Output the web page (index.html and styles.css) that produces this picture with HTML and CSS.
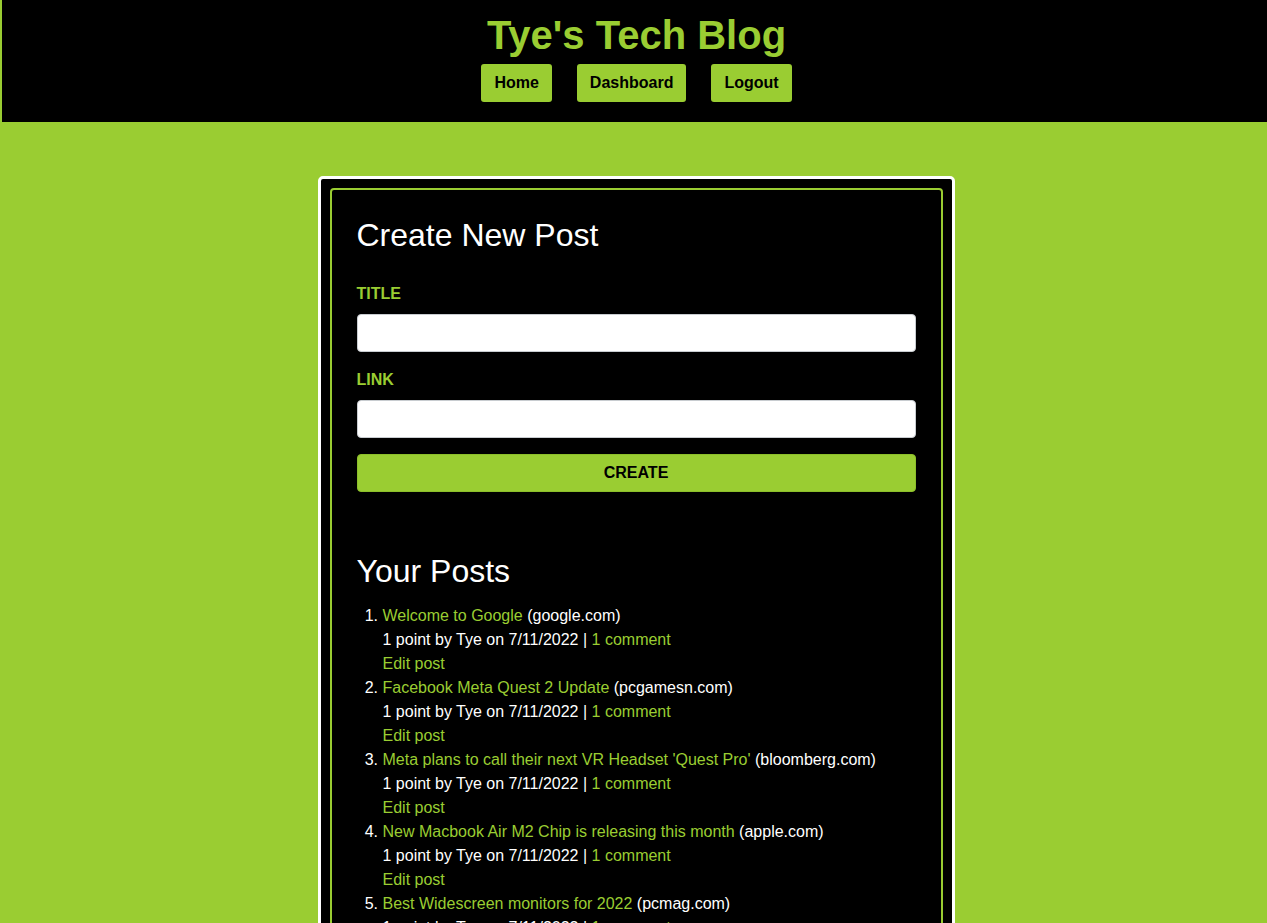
FILE: index.html
```html
<!DOCTYPE html>
<html lang="en">
<head>
<meta charset="utf-8">
<title>Tye's Tech Blog</title>
<link rel="stylesheet" href="styles.css">
</head>
<body>
<header class="site-header">
  <h1 class="site-title">Tye's Tech Blog</h1>
  <nav class="nav">
    <a class="nav-btn" href="#">Home</a>
    <a class="nav-btn" href="#">Dashboard</a>
    <a class="nav-btn" href="#">Logout</a>
  </nav>
</header>
<main class="main">
  <section class="card">
    <div class="card-inner">
      <h2 class="heading">Create New Post</h2>
      <form class="post-form">
        <label class="label" for="title">TITLE</label>
        <input class="input" id="title" type="text">
        <label class="label label-link" for="link">LINK</label>
        <input class="input" id="link" type="text">
        <button class="create-btn" type="button">CREATE</button>
      </form>
      <h2 class="heading posts-heading">Your Posts</h2>
      <ol class="posts">
        <li>
          <a href="#">Welcome to Google</a> (google.com)<br>
          1 point by Tye on 7/11/2022 | <a href="#">1 comment</a><br>
          <a href="#">Edit post</a>
        </li>
        <li>
          <a href="#">Facebook Meta Quest 2 Update</a> (pcgamesn.com)<br>
          1 point by Tye on 7/11/2022 | <a href="#">1 comment</a><br>
          <a href="#">Edit post</a>
        </li>
        <li>
          <a href="#">Meta plans to call their next VR Headset 'Quest Pro'</a> (bloomberg.com)<br>
          1 point by Tye on 7/11/2022 | <a href="#">1 comment</a><br>
          <a href="#">Edit post</a>
        </li>
        <li>
          <a href="#">New Macbook Air M2 Chip is releasing this month</a> (apple.com)<br>
          1 point by Tye on 7/11/2022 | <a href="#">1 comment</a><br>
          <a href="#">Edit post</a>
        </li>
        <li>
          <a href="#">Best Widescreen monitors for 2022</a> (pcmag.com)<br>
          1 point by Tye on 7/11/2022 | <a href="#">1 comment</a><br>
          <a href="#">Edit post</a>
        </li>
      </ol>
    </div>
  </section>
</main>
</body>
</html>
```
FILE: styles.css
```css
html, body {
  margin: 0;
  padding: 0;
}
body {
  background: #9acd32;
  font-family: "Liberation Sans", Arial, sans-serif;
  font-size: 16px;
  color: #fff;
}
.site-header {
  margin-left: 2px;
  background: #000;
  padding: 12px 0 20px 4px;
  display: flex;
  flex-direction: column;
  align-items: center;
}
.site-title {
  margin: 0;
  font-size: 40px;
  font-weight: bold;
  color: #9acd32;
  line-height: 46px;
}
.nav {
  display: flex;
  gap: 25px;
  margin-top: 6px;
}
.nav-btn {
  display: block;
  background: #9acd32;
  color: #000;
  font-weight: bold;
  text-decoration: none;
  padding: 10px 13px;
  line-height: 18px;
  border-radius: 3px;
}
.main {
  padding: 54px 0 40px 5px;
  display: flex;
  justify-content: center;
}
.card {
  width: 613px;
  background: #000;
  border: 3px solid #fff;
  border-radius: 5px;
  padding: 9px;
}
.card-inner {
  border: 2px solid #9acd32;
  border-radius: 4px;
  padding: 27px 25px 30px;
}
.heading {
  margin: 0;
  font-size: 32px;
  font-weight: normal;
  line-height: 37px;
  color: #fff;
}
.post-form {
  display: flex;
  flex-direction: column;
  margin-top: 31px;
}
.label {
  color: #9acd32;
  font-weight: bold;
  line-height: 18px;
  margin-bottom: 11px;
}
.label-link {
  margin-top: 19px;
}
.input {
  height: 38px;
  box-sizing: border-box;
  border: 1px solid #c8ccd0;
  border-radius: 4px;
  background: #fff;
  font: inherit;
  padding: 0 10px;
}
.create-btn {
  margin-top: 16px;
  height: 38px;
  border: 1px solid #8cbf2a;
  border-radius: 4px;
  background: #9acd32;
  color: #000;
  font: bold 16px "Liberation Sans", Arial, sans-serif;
  cursor: pointer;
}
.posts-heading {
  margin-top: 61px;
}
.posts {
  margin: 14px 0 0;
  padding-left: 26px;
  line-height: 24px;
}
.posts a {
  color: #9acd32;
  text-decoration: none;
}
```
